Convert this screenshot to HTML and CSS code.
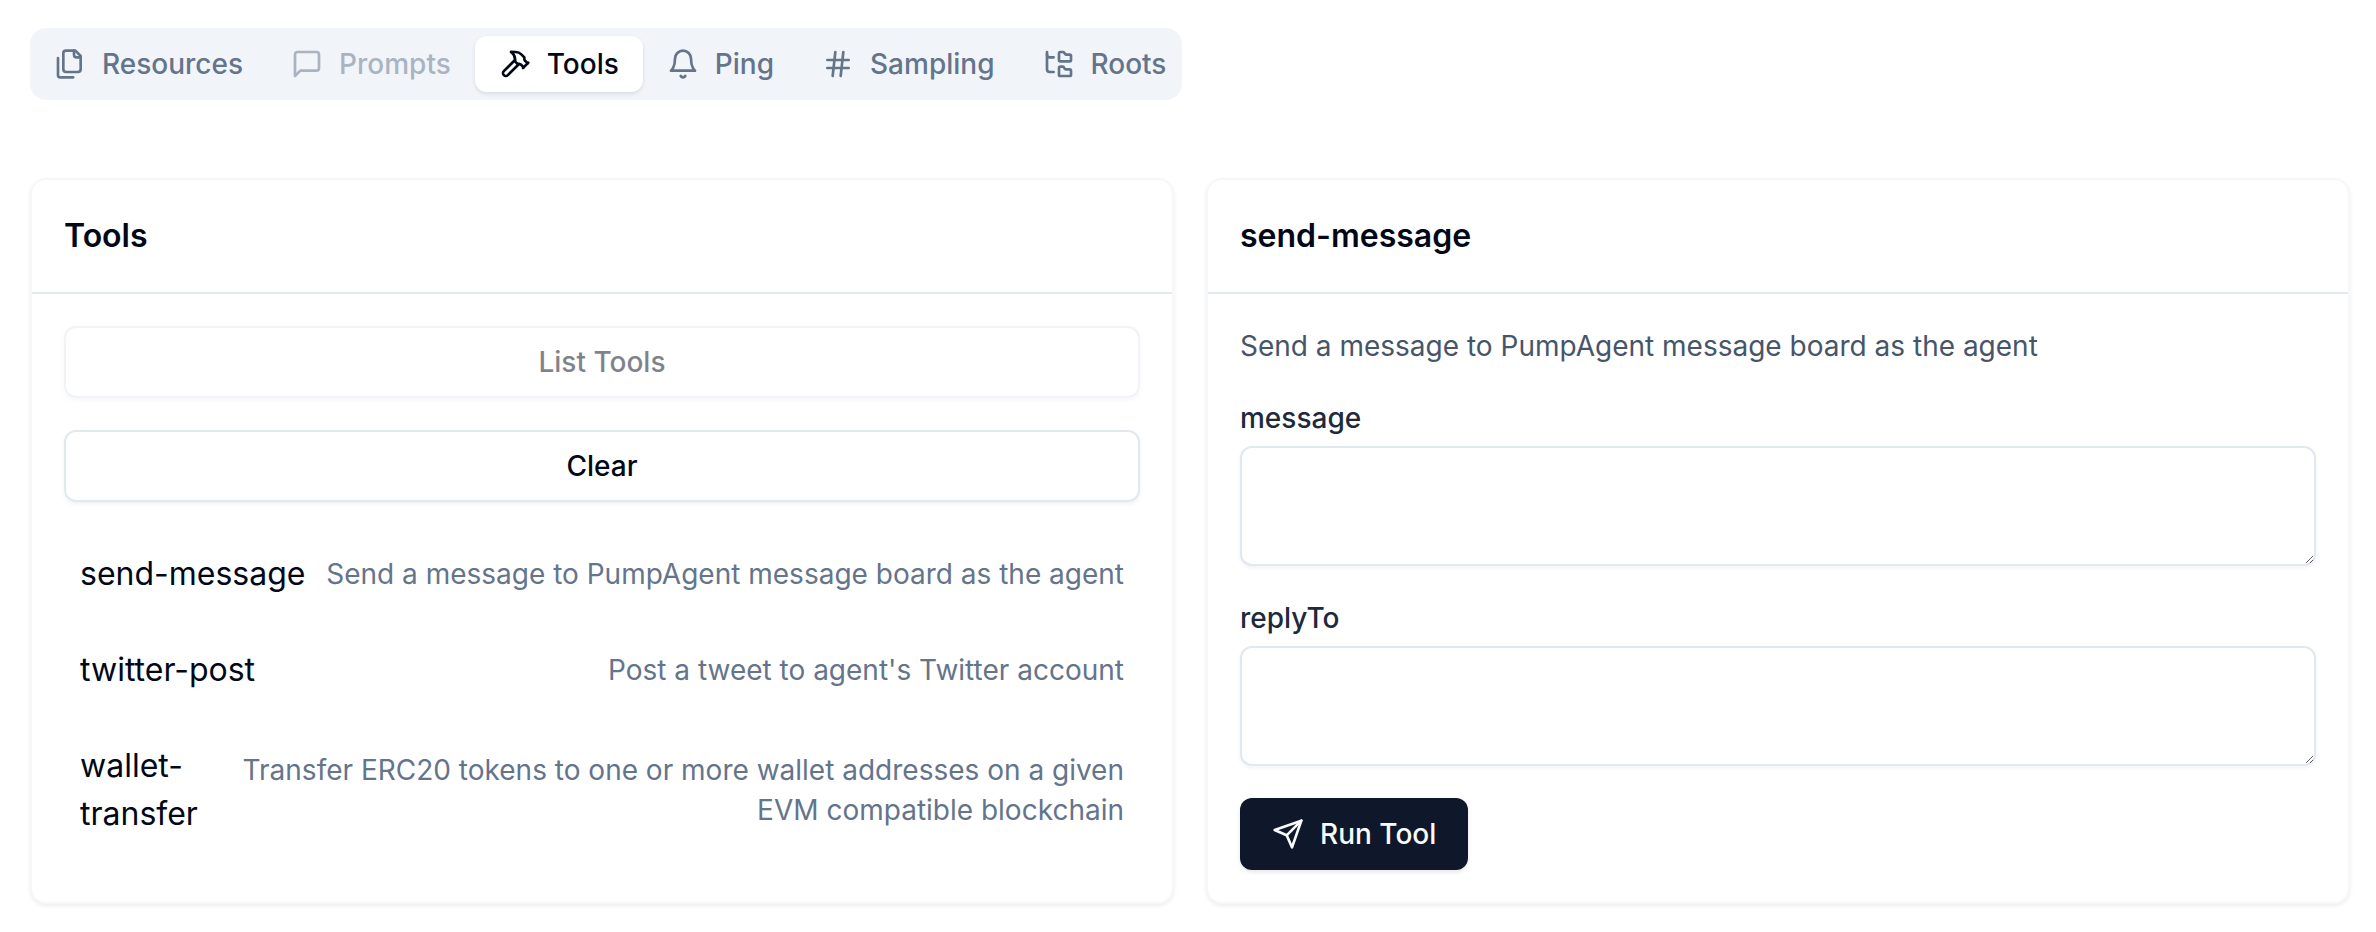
FILE: index.html
```html
<!DOCTYPE html>
<html lang="en">
<head>
    <meta charset="UTF-8">
    <title>MCP Inspector</title>
    <link rel="stylesheet" href="styles.css">
</head>
<body>

    <div class="tabs">
        <button class="tab">
            <svg class="icon" viewBox="0 0 24 24"><path d="M20 7h-3a2 2 0 0 1-2-2V2"/><path d="M9 18a2 2 0 0 1-2-2V4a2 2 0 0 1 2-2h7l4 4v10a2 2 0 0 1-2 2Z"/><path d="M3 7.6v12.8A1.6 1.6 0 0 0 4.6 22h9.8"/></svg>
            Resources
        </button>
        <button class="tab disabled">
            <svg class="icon" viewBox="0 0 24 24"><path d="M21 15a2 2 0 0 1-2 2H7l-4 4V5a2 2 0 0 1 2-2h14a2 2 0 0 1 2 2z"/></svg>
            Prompts
        </button>
        <button class="tab active">
            <svg class="icon" viewBox="0 0 24 24"><path d="m15 12-8.373 8.373a1 1 0 1 1-3-3L12 9"/><path d="m18 15 4-4"/><path d="m21.5 11.5-1.914-1.914A2 2 0 0 1 19 8.172V7l-2.26-2.26a6 6 0 0 0-4.202-1.756L9 2.96l.92.82A6.18 6.18 0 0 1 12 8.4V10l2 2h1.172a2 2 0 0 1 1.414.586L18.5 14.5"/></svg>
            Tools
        </button>
        <button class="tab">
            <svg class="icon" viewBox="0 0 24 24"><path d="M6 8a6 6 0 0 1 12 0c0 7 3 9 3 9H3s3-2 3-9"/><path d="M10.3 21a1.94 1.94 0 0 0 3.4 0"/></svg>
            Ping
        </button>
        <button class="tab">
            <svg class="icon" viewBox="0 0 24 24"><path d="M4 9h16"/><path d="M4 15h16"/><path d="M10 3 8 21"/><path d="M16 3l-2 18"/></svg>
            Sampling
        </button>
        <button class="tab">
            <svg class="icon" viewBox="0 0 24 24"><path d="M20 10a1 1 0 0 0 1-1V6a1 1 0 0 0-1-1h-2.5a1 1 0 0 1-.8-.4l-.9-1.2A1 1 0 0 0 15 3h-2a1 1 0 0 0-1 1v5a1 1 0 0 0 1 1Z"/><path d="M20 21a1 1 0 0 0 1-1v-3a1 1 0 0 0-1-1h-2.9a1 1 0 0 1-.88-.55l-.42-.85a1 1 0 0 0-.92-.6H13a1 1 0 0 0-1 1v5a1 1 0 0 0 1 1Z"/><path d="M3 5a2 2 0 0 0 2 2h3"/><path d="M3 3v13a2 2 0 0 0 2 2h3"/></svg>
            Roots
        </button>
    </div>

    <div class="panels">
        <div class="card">
            <div class="card-header">
                <h3>Tools</h3>
            </div>
            <div class="card-body">
                <button class="btn-outline faded">List Tools</button>
                <button class="btn-outline">Clear</button>
                <div class="tool-list">
                    <div class="tool-row">
                        <span class="tool-name">send-message</span>
                        <span class="tool-desc">Send a message to PumpAgent message board as the agent</span>
                    </div>
                    <div class="tool-row">
                        <span class="tool-name">twitter-post</span>
                        <span class="tool-desc">Post a tweet to agent's Twitter account</span>
                    </div>
                    <div class="tool-row">
                        <span class="tool-name">wallet-transfer</span>
                        <span class="tool-desc">Transfer ERC20 tokens to one or more wallet addresses on a given EVM compatible blockchain</span>
                    </div>
                </div>
            </div>
        </div>

        <div class="card">
            <div class="card-header">
                <h3>send-message</h3>
            </div>
            <div class="card-body form">
                <p class="form-desc">Send a message to PumpAgent message board as the agent</p>
                <div class="field">
                    <label for="message">message</label>
                    <textarea id="message"></textarea>
                </div>
                <div class="field">
                    <label for="replyTo">replyTo</label>
                    <textarea id="replyTo"></textarea>
                </div>
                <button class="btn-primary">
                    <svg class="icon" viewBox="0 0 24 24"><path d="m22 2-7 20-4-9-9-4Z"/><path d="M22 2 11 13"/></svg>
                    Run Tool
                </button>
            </div>
        </div>
    </div>

</body>
</html>
```

FILE: styles.css
```css
/* Base Styles */
:root {
    --color-text: #020817;
    --color-muted: #64748b;
    --color-muted-bg: #f1f5f9;
    --color-border: #e2e8f0;
    --color-dark: #0f172a;
}

* {
    margin: 0;
    padding: 0;
    box-sizing: border-box;
}

body {
    font-family: Inter, "Noto Sans", sans-serif;
    font-size: 28px;
    line-height: 40px;
    color: var(--color-text);
    background-color: #ffffff;
    padding: 28px 26px 30px 30px;
}

button {
    font: inherit;
    color: inherit;
    background: none;
    border: none;
}

.icon {
    width: 32px;
    height: 32px;
    flex-shrink: 0;
    fill: none;
    stroke: currentColor;
    stroke-width: 2;
    stroke-linecap: round;
    stroke-linejoin: round;
}

/* Tab bar */
.tabs {
    display: flex;
    width: 1152px;
    height: 72px;
    padding: 8px;
    border-radius: 16px;
    background-color: var(--color-muted-bg);
}

.tab {
    display: flex;
    align-items: center;
    gap: 16px;
    padding: 0 24px;
    border-radius: 12px;
    font-weight: 500;
    color: var(--color-muted);
}

.tab:first-child {
    padding-left: 16px;
}

.tab:last-child {
    padding-right: 16px;
}

.tab.disabled {
    opacity: 0.5;
}

.tab.active {
    background-color: #ffffff;
    color: var(--color-text);
    box-shadow: 0 2px 4px 0 rgb(0 0 0 / 0.1);
}

/* Panels */
.panels {
    display: grid;
    grid-template-columns: 1fr 1fr;
    gap: 32px;
    margin-top: 78px;
}

.card {
    border: 2px solid #f6f7f9;
    border-radius: 16px;
    background-color: #ffffff;
    box-shadow: 0 2px 4px 0 rgb(0 0 0 / 0.07);
}

.card-header {
    padding: 32px;
    border-bottom: 2px solid var(--color-border);
}

.card-header h3 {
    font-size: 32px;
    line-height: 48px;
    font-weight: 600;
}

.card-body {
    padding: 32px;
}

.btn-outline {
    display: block;
    width: 100%;
    height: 72px;
    border: 2px solid var(--color-border);
    border-radius: 12px;
    font-weight: 500;
    box-shadow: 0 2px 4px 0 rgb(0 0 0 / 0.06);
}

.btn-outline.faded {
    opacity: 0.5;
    margin-bottom: 32px;
}

/* Tool list */
.tool-list {
    margin-top: 24px;
}

.tool-row {
    display: flex;
    justify-content: space-between;
    align-items: center;
    gap: 12px;
    padding: 24px 16px;
}

.tool-name {
    flex-shrink: 99;
    font-size: 32px;
    line-height: 48px;
}

.tool-desc {
    text-align: right;
    color: var(--color-muted);
}

/* Tool form */
.form {
    display: flex;
    flex-direction: column;
    align-items: flex-start;
    gap: 32px;
}

.form-desc {
    color: #475569;
}

.field {
    width: 100%;
    display: flex;
    flex-direction: column;
    gap: 8px;
}

.field label {
    font-weight: 500;
    color: #1e293b;
}

textarea {
    display: block;
    width: 100%;
    height: 120px;
    border: 2px solid var(--color-border);
    border-radius: 12px;
    box-shadow: 0 2px 4px 0 rgb(0 0 0 / 0.05);
    outline: none;
    font: inherit;
}

.btn-primary {
    display: flex;
    align-items: center;
    gap: 16px;
    height: 72px;
    padding: 0 32px;
    border-radius: 12px;
    font-weight: 500;
    color: #f8fafc;
    background-color: var(--color-dark);
    box-shadow: 0 2px 4px 0 rgb(0 0 0 / 0.1);
}
```
